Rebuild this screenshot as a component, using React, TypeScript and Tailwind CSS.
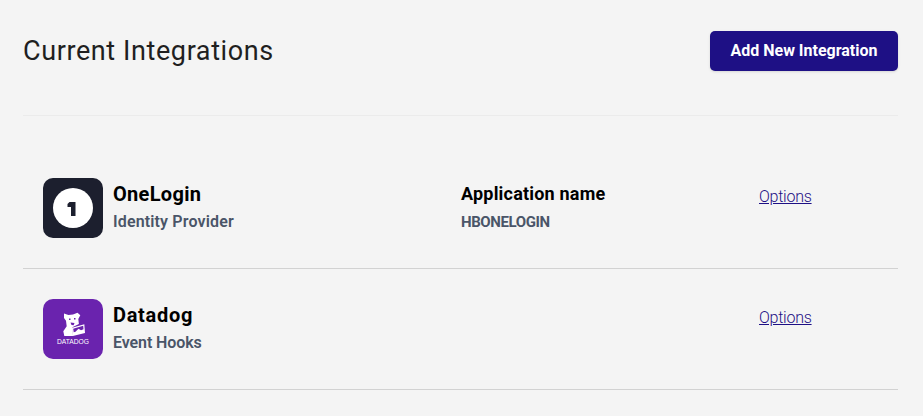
const font = "font-['Roboto','Liberation_Sans',sans-serif]"

function OneLoginIcon() {
  return (
    <div className="flex h-[60px] w-[60px] shrink-0 items-center justify-center rounded-[10px] bg-[#1c1f2e]">
      <svg width="40" height="40" viewBox="0 0 40 40">
        <circle cx="20" cy="20" r="20" fill="#ffffff" />
        <path d="M14.500 19v-3l2-2h6v14H18v-9z" fill="#1c1f2e" />
      </svg>
    </div>
  )
}

function DatadogIcon() {
  return (
    <div className="flex h-[60px] w-[60px] shrink-0 flex-col items-center rounded-[10px] bg-[#6a23ae] pt-[13px]">
      <svg width="24" height="24" viewBox="0 0 24 24" className="ml-[2px]">
        {/* dog */}
        <path
          d="M2 1.500L6.500 3 11 2.600 15.500.7l2.800 2.600-2 3.700.6 5-6.500 3.300.6 8.700H2.300l-1-4.700 3.400-5L4 8.700 2 6z"
          fill="#ffffff"
        />
        {/* paper */}
        <path d="M10 15.800l12.300-3.600.7 8.800-12.200 3z" fill="#ffffff" />
        <path d="M11.200 16.700l10-2.900.3 3.500-2.500 1-2.500-1.500-3 3-1.800.5z" fill="#6a23ae" />
        <path d="M7 6.500h1.500V8H7zM12 6h1.500v1.500H12z" fill="#6a23ae" />
        <path d="M8.500 10.500l4 .5-.8 2.300-2.200-.3z" fill="#6a23ae" />
      </svg>
      <span className="mt-[1.5px] font-['Liberation_Sans',sans-serif] text-[6.7px] leading-[8px] text-white">
        DATADOG
      </span>
    </div>
  )
}

function Row({
  icon,
  name,
  nameClass,
  kind,
  kindClass,
  appName,
}: {
  icon: React.ReactNode
  name: string
  nameClass: string
  kind: string
  kindClass: string
  appName?: string
}) {
  return (
    <div className="grid grid-cols-[418px_298px_1fr] border-b border-[#d2d2d2] px-5 py-[30px]">
      <div className="flex items-center gap-[10px]">
        {icon}
        <div className="pt-[2px] pb-[4px]">
          <div className={`text-[20px] leading-[28px] font-bold text-black ${nameClass}`}>{name}</div>
          <div className={`mt-[2px] text-[16px] leading-[24px] font-semibold text-[#4a5568] ${kindClass}`}>{kind}</div>
        </div>
      </div>
      <div className="flex flex-col justify-center pt-[2px] pb-[4px]">
        {appName && (
          <>
            <div className="text-[18px] leading-[28px] font-bold tracking-[0.2px] text-black">Application name</div>
            <div className="mt-[2px] text-[15px] leading-[24px] font-bold tracking-[-0.4px] text-[#4a5568]">{appName}</div>
          </>
        )}
      </div>
      <div className="pt-[7px]">
        <a href="#" className="text-[16px] leading-[24px] font-light tracking-[-0.25px] text-[#1e1085] underline">
          Options
        </a>
      </div>
    </div>
  )
}

export default function App() {
  return (
    <div className={`min-h-[416px] bg-[#f4f4f4] pt-[31px] pr-[25px] pl-[23px] ${font}`}>
      <div className="flex items-center justify-between border-b border-[#ebebeb] pb-[44px]">
        <h1 className="text-[27px] leading-[40px] font-normal tracking-[0.6px] text-[#1f1f1f]">Current Integrations</h1>
        <button className="h-10 w-[188px] rounded-[5px] bg-[#1e1085] text-[16px] font-bold tracking-[0px] text-white shadow-sm">
          Add New Integration
        </button>
      </div>
      <div className="mt-[32px]">
        <Row
          icon={<OneLoginIcon />}
          name="OneLogin"
          nameClass="tracking-[0.3px]"
          kind="Identity Provider"
          kindClass="tracking-[0.15px]"
          appName="HBONELOGIN"
        />
        <Row
          icon={<DatadogIcon />}
          name="Datadog"
          nameClass="tracking-[0.7px]"
          kind="Event Hooks"
          kindClass="tracking-[-0.1px]"
        />
      </div>
    </div>
  )
}
